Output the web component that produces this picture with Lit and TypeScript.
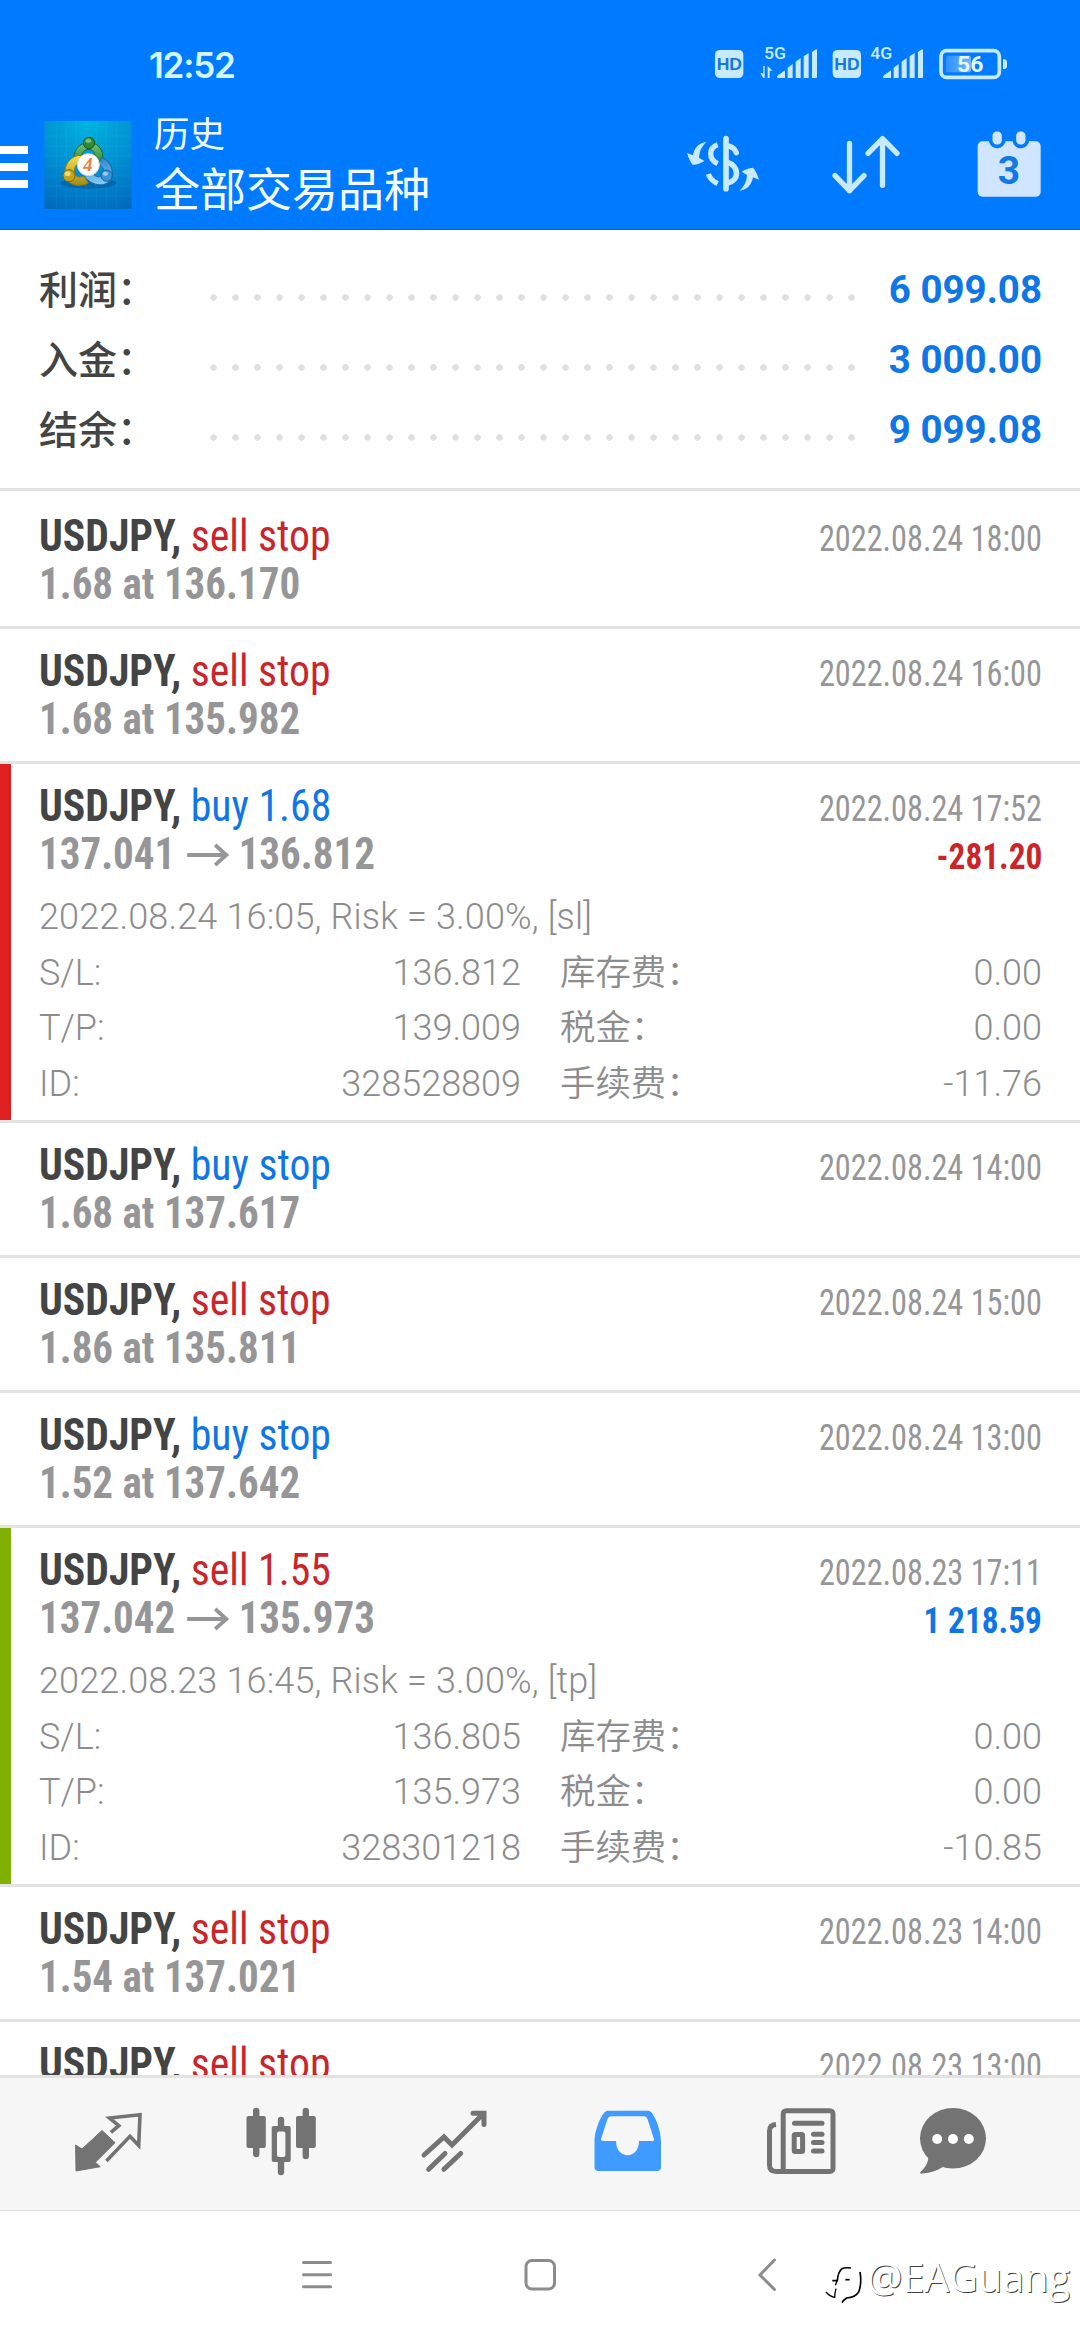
import { LitElement, html, svg, css, nothing } from "lit";
import { customElement, property } from "lit/decorators.js";
import { classMap } from "lit/directives/class-map.js";

interface Deal {
  kind: "buy" | "sell";
  action: string;
  price: string;
  closePrice?: string;
  time: string;
  profit?: string;
  comment?: string;
  details?: [string, string, string, string][];
}

const deals: Deal[] = [
  { kind: "sell", action: "sell stop", price: "1.68 at 136.170", time: "2022.08.24 18:00" },
  { kind: "sell", action: "sell stop", price: "1.68 at 135.982", time: "2022.08.24 16:00" },
  {
    kind: "buy", action: "buy 1.68", price: "137.041", closePrice: "136.812",
    time: "2022.08.24 17:52", profit: "-281.20",
    comment: "2022.08.24 16:05, Risk = 3.00%, [sl]",
    details: [
      ["S/L:", "136.812", "库存费：", "0.00"],
      ["T/P:", "139.009", "税金：", "0.00"],
      ["ID:", "328528809", "手续费：", "-11.76"],
    ],
  },
  { kind: "buy", action: "buy stop", price: "1.68 at 137.617", time: "2022.08.24 14:00" },
  { kind: "sell", action: "sell stop", price: "1.86 at 135.811", time: "2022.08.24 15:00" },
  { kind: "buy", action: "buy stop", price: "1.52 at 137.642", time: "2022.08.24 13:00" },
  {
    kind: "sell", action: "sell 1.55", price: "137.042", closePrice: "135.973",
    time: "2022.08.23 17:11", profit: "1 218.59",
    comment: "2022.08.23 16:45, Risk = 3.00%, [tp]",
    details: [
      ["S/L:", "136.805", "库存费：", "0.00"],
      ["T/P:", "135.973", "税金：", "0.00"],
      ["ID:", "328301218", "手续费：", "-10.85"],
    ],
  },
  { kind: "sell", action: "sell stop", price: "1.54 at 137.021", time: "2022.08.23 14:00" },
  { kind: "sell", action: "sell stop", price: "", time: "2022.08.23 13:00" },
];

const signalBars = svg`<path d="M0 83 Q0 80 4 77 L22 64 H24 V86 H3 Q0 86 0 83Z M32 55 L47 44 V86 H32Z M56 37 L71 26 V86 H56Z M80 21 L95 11 V86 H80Z M105 8 L117 0 Q120 -1 120 3 V83 Q120 86 117 86 H105Z"/>`;

@customElement("status-bar")
class StatusBar extends LitElement {
  static styles = css`
    :host { display: flex; height: 88px; align-items: flex-start; color: #c8eaff; }
    .clock { margin: 43px auto 0 149px; font: 600 35px/44px Inter, sans-serif; letter-spacing: -1.2px; color: #d6f6ff; }
    .icons { display: block; margin: 40px 68px 0 0; }
    .hd { font: 700 50px "Liberation Sans", sans-serif; fill: #1179e6; }
    .net { font: 500 47px Roboto, sans-serif; }
    .pct { font: 700 64px Roboto, sans-serif; fill: #e3f9ff; }
  `;
  render() {
    return html`
      <span class="clock">12:52</span>
      <svg class="icons" width="300" height="48" viewBox="93 30 900 144" fill="#c8eaff">
        <defs><linearGradient id="charge"><stop offset="0" stop-color="#2c90ff"/><stop offset="1" stop-color="#74b4ff"/></linearGradient></defs>
        <rect x="102" y="60" width="85" height="84" rx="14"/>
        <text class="hd" x="107" y="121" textLength="76" lengthAdjust="spacingAndGlyphs">HD</text>
        <text class="net" x="249" y="87" textLength="66" lengthAdjust="spacingAndGlyphs">5G</text>
        <path d="M247 108 H251 V144 H247 L238 130 H247Z M260 144 V108 L275 122 H266 V144Z"/>
        <g transform="translate(288 58)">${signalBars}</g>
        <rect x="455" y="60" width="85" height="84" rx="14"/>
        <text class="hd" x="460" y="121" textLength="76" lengthAdjust="spacingAndGlyphs">HD</text>
        <text class="net" x="568" y="87" textLength="66" lengthAdjust="spacingAndGlyphs">4G</text>
        <g transform="translate(606 58)">${signalBars}</g>
        <rect x="780" y="62" width="175" height="80" rx="17" fill="none" stroke="#c8eaff" stroke-width="11"/>
        <rect x="795" y="77" width="75" height="50" rx="6" fill="url(#charge)"/>
        <path d="M966 88 H972 Q978 90 978 96 V109 Q978 115 972 117 H966Z"/>
        <text class="pct" x="828" y="127" textLength="79" lengthAdjust="spacingAndGlyphs">56</text>
      </svg>`;
  }
}

@customElement("app-header")
class AppHeader extends LitElement {
  static styles = css`
    :host { display: flex; height: 141px; align-items: flex-start; color: #f2fcff; border-bottom: 1px solid #1c63ad; }
    .menu { display: flex; flex-direction: column; gap: 9px; margin-top: 58px; }
    .menu i { width: 28px; height: 8px; background: #fff; }
    .logo { display: block; margin: 33px 0 0 16px; }
    .logo-num { font: italic 700 56px "Liberation Serif", serif; fill: #e8803a; }
    .titles { display: flex; flex-direction: column; margin: 22px auto 0 22px; font-family: Roboto, "Noto Sans CJK SC", sans-serif; }
    .sub { font-size: 35.5px; line-height: 50px; }
    .title { font-size: 46px; line-height: 61px; }
    .actions { display: block; margin: 40px 31px 0 0; }
    .day { font: 700 117px Roboto, sans-serif; fill: #1179e6; }
  `;
  render() {
    return html`
      <div class="menu"><i></i><i></i><i></i></div>
      <svg class="logo" width="88" height="88" viewBox="12 3 262 264">
        <defs>
          <radialGradient id="sky" cx=".5" cy="0" r="1.1"><stop offset="0" stop-color="#00b4e0"/><stop offset=".5" stop-color="#0090d4"/><stop offset="1" stop-color="#0068bc"/></radialGradient>
          <linearGradient id="green" x2="0" y2="1"><stop offset="0" stop-color="#7cc47a"/><stop offset="1" stop-color="#1f7f2c"/></linearGradient>
          <linearGradient id="gold" x2="0" y2="1"><stop offset="0" stop-color="#f5e04a"/><stop offset="1" stop-color="#a58a10"/></linearGradient>
          <linearGradient id="blue" x2="0" y2="1"><stop offset="0" stop-color="#2c86c8"/><stop offset="1" stop-color="#86cdf6"/></linearGradient>
        </defs>
        <rect x="12" y="3" width="262" height="264" fill="url(#sky)"/>
        <path d="M48 3V267M78 3V267M108 3V267M138 3V267M168 3V267M198 3V267M228 3V267M12 48H274M12 78H274M12 108H274M12 138H274M12 168H274M12 198H274M12 228H274" stroke="#fff" stroke-opacity=".07" stroke-width="2"/>
        <ellipse cx="144" cy="190" rx="84" ry="16" fill="#003a78" opacity=".35"/>
        <path d="M101 128 C96 92 116 68 146 68 C178 68 194 96 186 134 L160 128 C168 104 162 90 146 88 C128 88 120 104 130 122 Z" fill="url(#green)" stroke="#1d6c33" stroke-width="3"/>
        <path d="M122 106 C92 106 70 132 74 166 C80 194 112 204 144 190 L132 168 C114 176 102 168 102 152 C104 136 112 128 128 126 Z" fill="url(#gold)" stroke="#8d7a14" stroke-width="3"/>
        <path d="M184 112 C210 122 222 150 212 178 C196 202 158 200 132 170 L156 158 C168 174 180 174 188 162 C194 150 190 140 174 134 Z" fill="url(#blue)" stroke="#1c69a8" stroke-width="3"/>
        <circle cx="146" cy="69" r="17" fill="#318a38" stroke="#145a22" stroke-width="3"/><ellipse cx="144" cy="62" rx="9" ry="6" fill="#9ad79a" opacity=".7"/>
        <circle cx="86" cy="167" r="18" fill="#c5a41c" stroke="#7c6a10" stroke-width="3"/><ellipse cx="82" cy="161" rx="9" ry="7" fill="#fff3a0" opacity=".7"/>
        <circle cx="199" cy="167" r="17" fill="#3b92d4" stroke="#175f9c" stroke-width="3"/><ellipse cx="195" cy="161" rx="8" ry="6" fill="#c5ebff" opacity=".7"/>
        <circle cx="144" cy="134" r="33" fill="#fff" stroke="#d8d8c8" stroke-width="3"/>
        <text class="logo-num" x="143" y="153" text-anchor="middle">4</text>
      </svg>
      <div class="titles"><span class="sub">历史</span><span class="title">全部交易品种</span></div>
      <svg class="actions" width="368" height="72" viewBox="0 294 1104 216" fill="#c8eaff">
        <g fill="none" stroke="#c8eaff" stroke-width="15">
          <path d="M135 326V476" stroke-linecap="round" stroke-width="17"/>
          <path d="M138 347Q159 350 166 368" stroke-linecap="round" stroke-width="16"/>
          <path d="M138 397C176 408 176 452 138 460" stroke-width="17"/>
          <path d="M110 344C82 354 82 388 110 401" stroke-width="16"/>
          <path d="M82 432Q88 450 110 461" stroke-width="16"/>
        </g>
        <path d="M76 336C55 338 40 352 36 376L18 369Q26 395 36 405Q55 404 70 393L54 383C56 362 62 350 76 336Z"/>
        <path transform="rotate(180 126 409)" d="M76 336C55 338 40 352 36 376L18 369Q26 395 36 405Q55 404 70 393L54 383C56 362 62 350 76 336Z"/>
        <path d="M505.5 340V482M462 437L505.5 482L549 437M604.5 466V326M561 370L604.5 326L648 370" fill="none" stroke="#c8eaff" stroke-width="16" stroke-linecap="round" stroke-linejoin="round"/>
        <g fill="#d0e5ff">
          <rect x="890" y="334" width="189" height="166" rx="14"/>
          <g stroke="#007aff" stroke-width="11"><rect x="929" y="299" width="39" height="50" rx="18"/><rect x="1000" y="299" width="39" height="50" rx="18"/></g>
        </g>
        <text class="day" x="984" y="463" text-anchor="middle">3</text>
      </svg>`;
  }
}

@customElement("account-summary")
class AccountSummary extends LitElement {
  static styles = css`
    :host { display: flex; flex-direction: column; height: 234px; padding: 24px 38px 0 39px; box-sizing: content-box; border-bottom: 3px solid #e3e3e3; font-family: Roboto, "Noto Sans CJK SC", sans-serif; }
    .row { display: flex; align-items: center; height: 70px; }
    .label { width: 171px; margin-bottom: 4px; font-size: 39px; font-weight: 500; color: #444; }
    .dots { width: 652px; height: 7px; margin-top: 16px; background: radial-gradient(circle 3.5px at 3.5px 3.5px, #e0e0e0 85%, transparent) 0 0 / 22px 7px repeat-x; }
    .value { margin-left: auto; font-size: 38.5px; font-weight: 700; color: #0f76e6; }
  `;
  render() {
    const rows = [["利润：", "6 099.08"], ["入金：", "3 000.00"], ["结余：", "9 099.08"]];
    return rows.map(([label, value]) => html`
      <div class="row"><span class="label">${label}</span><span class="dots"></span><span class="value">${value}</span></div>`);
  }
}

@customElement("deal-row")
class DealRow extends LitElement {
  @property({ attribute: false }) deal!: Deal;
  static styles = css`
    :host { display: block; border-bottom: 3px solid #e3e3e3; font-family: Roboto, "Noto Sans CJK SC", sans-serif; color: #969698; }
    .body { padding: 18px 38px 18px 39px; }
    .body.open { padding-left: 28px; padding-bottom: 8px; border-left: 11px solid #e02020; }
    .body.open.gain { border-left-color: #80b000; }
    .line { display: flex; justify-content: space-between; align-items: baseline; height: 48px; font-size: 44px; line-height: 48px; font-stretch: 75%; white-space: pre; }
    .line > span { display: inline-block; transform-origin: left; }
    .head { transform: scaleX(0.948); }
    .symbol { font-weight: 700; color: #444; }
    .buy { color: #0f76e6; }
    .sell { color: #c9252b; }
    .price { font-weight: 700; transform: scaleX(0.932); }
    .arrow { margin: 0 10px 2px 12px; }
    .line > .time { font-size: 36px; font-weight: 370; transform: scaleX(0.896); transform-origin: right; }
    .line > .profit { font-size: 36px; font-weight: 700; transform: scaleX(0.925); transform-origin: right; }
    .more { padding-top: 12px; font-size: 36px; line-height: 55.5px; font-weight: 350; color: #8c8c8e; }
    .comment { letter-spacing: 0.15px; }
    .detail { display: grid; grid-template-columns: 100px 382px 39px 200px 1fr; height: 55.5px; }
    .num { text-align: right; }
    .cjk { grid-column: 4; font-size: 35.4px; }
  `;
  render() {
    const d = this.deal;
    const gain = !!d.profit && !d.profit.startsWith("-");
    return html`
      <div class=${classMap({ body: true, open: !!d.profit, gain })}>
        <div class="line">
          <span class="head"><span class="symbol">USDJPY, </span><span class=${d.kind}>${d.action}</span></span>
          <span class="time">${d.time}</span>
        </div>
        <div class="line">
          <span class="price">${d.price}${d.closePrice
            ? html`<svg class="arrow" width="46" height="24" viewBox="0 0 46 24"><path d="M1 12H43M31 2L43 12L31 22" fill="none" stroke="#969698" stroke-width="4"/></svg>${d.closePrice}`
            : nothing}</span>
          ${d.profit ? html`<span class=${"profit " + (gain ? "buy" : "sell")}>${d.profit}</span>` : nothing}
        </div>
        ${d.details ? html`
          <div class="more">
            <div class="comment">${d.comment}</div>
            ${d.details.map(([a, b, c, e]) => html`
              <div class="detail"><span>${a}</span><span class="num">${b}</span><span class="cjk">${c}</span><span class="num">${e}</span></div>`)}
          </div>` : nothing}
      </div>`;
  }
}

@customElement("tab-bar")
class TabBar extends LitElement {
  static styles = css`
    :host { display: flex; height: 132px; padding-left: 22px; background: #f6f6f6; border-top: 3px solid #e2e2e2; border-bottom: 1px solid #dcdcdc; }
    svg { display: block; flex: none; }
  `;
  render() {
    const icons = [
      svg`<path d="M110.9 2132.3L118.8 2125.7L109.5 2118L140 2114.7L138.7 2145.5L130 2136.3L106.4 2161" fill="none" stroke="#737373" stroke-width="3.6"/>
        <path d="M102 2130.5L115 2142.7L95.4 2162.3L100.2 2166.7L76 2171L75.6 2145L82 2149Z" stroke="#737373" stroke-linejoin="round"/>`,
      svg`<path d="M256.2 2111V2154M281 2120V2172M305.8 2111V2156" stroke="#737373" stroke-width="6.4" stroke-linecap="round"/>
        <rect x="246.5" y="2116" width="19.3" height="32" rx="2"/><rect x="296" y="2116" width="19.8" height="32" rx="2"/>
        <rect x="271.7" y="2126" width="19" height="36" rx="2"/><rect x="277" y="2131.5" width="8.4" height="25.5" rx="2" fill="#f6f6f6"/>`,
      svg`<path d="M424 2155L444 2137L452 2145L482 2115M473 2113.3H484V2124.5M428.7 2169.3L445 2153.5M443.9 2169.3L460.7 2153.5" fill="none" stroke="#737373" stroke-width="5" stroke-linecap="round"/>`,
      svg`<path fill="#3f9bff" fill-rule="evenodd" d="M607 2110.7H649C654 2112 661 2130 661 2141V2167Q661 2171 657 2171H598.5Q594.5 2171 594.5 2167V2141C594.5 2130 602 2112 607 2110.7ZM611 2116.3Q608.5 2116.5 607.5 2119L601 2139Q601 2141 603 2141H616C616 2160 639 2160 639 2141H652Q654.5 2141 654 2139L647.5 2119Q646.5 2116.5 644.5 2116.3Z"/>`,
      svg`<g fill="none" stroke="#737373" stroke-width="5" stroke-linecap="round"><rect x="783.2" y="2110.7" width="49.8" height="60.7" rx="3"/>
        <path d="M776 2124.5Q769.5 2125 769.5 2131V2165Q769.5 2171.4 776 2171.4H786" stroke-linecap="butt"/>
        <path d="M794.5 2123.3H822M813.5 2134.3H822M813.5 2142.5H822M813.5 2151H822"/><rect x="794.2" y="2134.5" width="8.4" height="17" rx="1"/></g>`,
      svg`<path d="M928.4 2157.3C928 2164 924 2169 920 2172.5Q920 2174 922 2173.5C931 2173 938 2170 943 2167Z"/>
        <ellipse cx="953" cy="2138.3" rx="33" ry="30.3"/><g fill="#fff"><circle cx="937.2" cy="2139" r="5"/><circle cx="953" cy="2139" r="5"/><circle cx="968.8" cy="2139" r="5"/></g>`,
    ];
    return icons.map((icon, i) => html`
      <svg width="173" height="132" viewBox=${`${22 + i * 173} 2078 173 132`} fill="#737373">${icon}</svg>`);
  }
}

@customElement("system-nav")
class SystemNav extends LitElement {
  static styles = css`
    :host { display: flex; position: relative; height: 129px; align-items: center; background: #fff; }
    .keys { display: block; }
    .mark { position: absolute; left: 824px; top: 42px; display: flex; align-items: flex-start; }
    .handle { font: 400 39.5px/50px "Open Sans", sans-serif; color: #fff; text-shadow: 1px 1px 0.5px rgba(0, 0, 0, 0.75); margin: -1px 0 0 3px; }
  `;
  render() {
    return html`
      <svg class="keys" width="1080" height="129" viewBox="0 2211 1080 129" fill="none" stroke="#8c8c8c" stroke-width="3" stroke-linecap="round">
        <path d="M303.5 2262.5H330.5M303.5 2274.7H330.5M303.5 2286.7H330.5"/>
        <rect x="526" y="2260.5" width="28.5" height="28.5" rx="6"/>
        <path d="M774.5 2260L760 2275L774.5 2289.5"/>
      </svg>
      <div class="mark">
        <svg width="40" height="52" viewBox="72 39 120 156" fill="none" stroke="#000">
          <path d="M97 122H112Q114 96 126 86Q134 82 153 84" stroke-width="5"/>
          <path d="M78 156Q90 170 104 172Q104 160 108 146M106 136L112 120" stroke-width="4"/>
          <path d="M136 119H149" stroke-width="5"/>
          <path d="M180 96Q186 130 176 156Q166 172 140 174Q130 180 126 188" stroke-width="5"/>
        </svg>
        <span class="handle">@EAGuang</span>
      </div>`;
  }
}

@customElement("app-root")
class AppRoot extends LitElement {
  static styles = css`
    :host { display: flex; flex-direction: column; width: 1080px; height: 2340px; overflow: hidden; background: #fff; }
    .top { background: #007aff; flex: none; }
    .history { flex: 1; min-height: 0; overflow: hidden; }
    .deals { padding-top: 3px; }
    tab-bar, system-nav { flex: none; }
  `;
  render() {
    return html`
      <div class="top"><status-bar></status-bar><app-header></app-header></div>
      <div class="history">
        <account-summary></account-summary>
        <div class="deals">${deals.map((d) => html`<deal-row .deal=${d}></deal-row>`)}</div>
      </div>
      <tab-bar></tab-bar>
      <system-nav></system-nav>`;
  }
}
